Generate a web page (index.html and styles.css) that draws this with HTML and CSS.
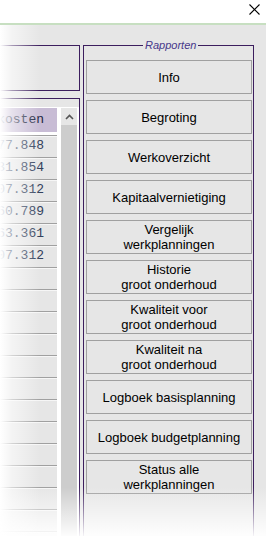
FILE: index.html
```html
<!DOCTYPE html>
<html lang="nl">
<head>
    <meta charset="UTF-8">
    <title>Rapporten</title>
    <link rel="stylesheet" href="styles.css">
</head>
<body>
    <div class="titlebar">
        <svg class="close" width="11" height="11" viewBox="0 0 11 11">
            <path d="M0.5 0.5L10.5 10.5M10.5 0.5L0.5 10.5" stroke="#000" stroke-width="1.1" fill="none"/>
        </svg>
    </div>
    <div class="accent"></div>

    <div class="window">
        <div class="left">
            <div class="topbox"></div>
            <div class="gridbox">
                <div class="grid">
                    <div class="cells">
                        <div class="head">Totale kosten</div>
                        <div class="row">177.848</div>
                        <div class="row">131.854</div>
                        <div class="row">107.312</div>
                        <div class="row">160.789</div>
                        <div class="row">163.361</div>
                        <div class="row">107.312</div>
                        <div class="row"></div>
                        <div class="row"></div>
                        <div class="row"></div>
                        <div class="row"></div>
                        <div class="row"></div>
                        <div class="row"></div>
                        <div class="row"></div>
                        <div class="row"></div>
                        <div class="row"></div>
                        <div class="row"></div>
                        <div class="row"></div>
                        <div class="row"></div>
                        <div class="row"></div>
                    </div>
                    <div class="scroll">
                        <div class="scroll-up">
                            <svg width="9" height="6" viewBox="0 0 9 6">
                                <path d="M1 5L4.5 1.5L8 5" stroke="#555" stroke-width="1.6" fill="none"/>
                            </svg>
                        </div>
                        <div class="scroll-track"></div>
                    </div>
                </div>
            </div>
        </div>

        <div class="group">
            <span class="group-title">Rapporten</span>
            <button class="btn">Info</button>
            <button class="btn">Begroting</button>
            <button class="btn">Werkoverzicht</button>
            <button class="btn">Kapitaalvernietiging</button>
            <button class="btn">Vergelijk<br>werkplanningen</button>
            <button class="btn">Historie<br>groot onderhoud</button>
            <button class="btn">Kwaliteit voor<br>groot onderhoud</button>
            <button class="btn">Kwaliteit na<br>groot onderhoud</button>
            <button class="btn">Logboek basisplanning</button>
            <button class="btn">Logboek budgetplanning</button>
            <button class="btn">Status alle<br>werkplanningen</button>
        </div>

        <div class="fade"></div>
    </div>
</body>
</html>
```

FILE: styles.css
```css
body {
    margin: 0;
    width: 266px;
    height: 536px;
    overflow: hidden;
    background: #fff;
    font-family: "Liberation Sans", Arial, sans-serif;
}
.titlebar {
    height: 23px;
    box-sizing: border-box;
    padding: 4px 6px 0 0;
    display: flex;
    justify-content: flex-end;
    align-items: flex-start;
}
.accent {
    height: 2px;
    background: #c7dfc1;
}
.window {
    position: relative;
    height: 511px;
    box-sizing: border-box;
    padding-top: 20px;
    background: #e6e6e6;
    display: flex;
    align-items: flex-start;
    overflow: hidden;
}
.left {
    flex: none;
    width: 140px;
    margin-left: -60px;
}
.topbox {
    height: 46px;
    box-sizing: border-box;
    border: 1px solid #3c1e5e;
}
.gridbox {
    margin-top: 7px;
    height: 600px;
    box-sizing: border-box;
    padding-top: 8px;
    border: 1px solid #3c1e5e;
}
.grid {
    display: flex;
    height: 100%;
    padding-right: 2px;
    background: #fff;
}
.cells {
    flex: 1;
    min-width: 0;
    padding-top: 1px;
    font-family: "Liberation Mono", "Courier New", monospace;
    font-size: 13px;
    text-align: right;
    white-space: nowrap;
}
.head {
    height: 24px;
    line-height: 24px;
    margin-bottom: 3px;
    padding-right: 13px;
    background: #c8bcd5;
    color: #1e2640;
}
.row {
    height: 22px;
    box-sizing: border-box;
    line-height: 20px;
    padding-right: 13px;
    border-top: 1px solid #a0a0a0;
    box-shadow: inset 0 1px 0 #f6f6f6;
    background: #e6e6e6;
    color: #33415c;
}
.scroll {
    flex: none;
    width: 16px;
    margin-left: 4px;
    padding-top: 1px;
    display: flex;
    flex-direction: column;
}
.scroll-up {
    height: 17px;
    background: #e6e6e6;
    display: flex;
    align-items: center;
    justify-content: center;
}
.scroll-track {
    flex: 1;
    background: #cdcdcd;
}
.group {
    position: relative;
    flex: none;
    width: 171px;
    height: 600px;
    margin-left: 3px;
    box-sizing: border-box;
    padding: 14px 0 0 2px;
    border: 1px solid #3c1e5e;
    display: flex;
    flex-direction: column;
    gap: 6px;
}
.group-title {
    position: absolute;
    top: -7px;
    left: 59px;
    padding: 0 2px;
    background: #e6e6e6;
    font-size: 11px;
    line-height: 13px;
    font-style: italic;
    color: #47378a;
}
.btn {
    flex: none;
    width: 166px;
    height: 34px;
    padding: 0;
    border: 1px solid #a0a0a0;
    border-radius: 0;
    background: #e6e6e6;
    font-family: inherit;
    font-size: 13px;
    line-height: 15px;
    color: #000;
    text-align: center;
}
.fade {
    position: absolute;
    inset: 0;
    pointer-events: none;
    background:
        linear-gradient(to right, #fff, rgba(255,255,255,0.55) 12px, rgba(255,255,255,0) 40px),
        linear-gradient(to bottom, rgba(255,255,255,0) 462px, rgba(255,255,255,0.95) 511px);
}
```
